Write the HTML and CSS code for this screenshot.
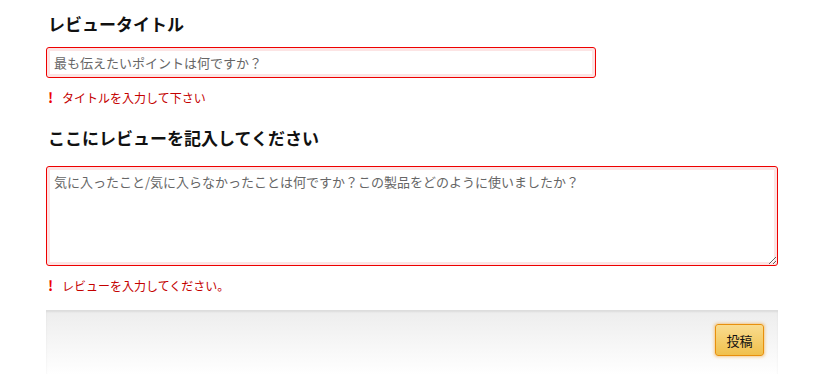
FILE: index.html
```html
<!DOCTYPE html>
<html lang="ja">
<head>
    <meta charset="UTF-8">
    <title>レビュー投稿</title>
    <link rel="stylesheet" href="styles.css">
</head>
<body>
<div class="review-form">
    <h3 class="field-title">レビュータイトル</h3>
    <input type="text" class="title-input is-error" placeholder="最も伝えたいポイントは何ですか？">
    <p class="error-msg"><span class="mark">!</span>タイトルを入力して下さい</p>

    <h3 class="field-title second">ここにレビューを記入してください</h3>
    <textarea class="body-input is-error" placeholder="気に入ったこと/気に入らなかったことは何ですか？この製品をどのように使いましたか？"></textarea>
    <p class="error-msg"><span class="mark">!</span>レビューを入力してください。</p>

    <div class="form-footer">
        <button class="submit-btn">投稿</button>
    </div>
</div>
</body>
</html>
```

FILE: styles.css
```css
body {
    margin: 0;
    font-family: "Noto Sans CJK JP", "Noto Sans", sans-serif;
    color: #111;
    background-color: #fff;
}

.review-form {
    width: 732px;
    margin-left: 46px;
}

.field-title {
    margin: 0;
    padding: 10px 0 0 2px;
    height: 27px;
    font-size: 17px;
    font-weight: bold;
    line-height: 27px;
}

.field-title.second {
    padding-top: 16px;
    height: 32px;
}

input.title-input,
textarea.body-input {
    display: block;
    box-sizing: border-box;
    font-family: inherit;
    font-size: 13px;
    color: #111;
    border: 1px solid #e00;
    border-radius: 3px;
    background-color: #fff;
    outline: none;
}

.is-error {
    box-shadow: 0 0 0 3px #fce4e4 inset;
}

input.title-input {
    width: 550px;
    height: 31px;
    margin-top: 10px;
    padding: 0 7px;
}

textarea.body-input {
    width: 732px;
    height: 100px;
    margin-top: 10px;
    padding: 6px 7px;
    resize: vertical;
    line-height: 18px;
}

::placeholder {
    color: #666;
}

.error-msg {
    margin: 0;
    padding: 8px 0 0 2px;
    height: 22px;
    font-size: 12px;
    line-height: 22px;
    color: #c40000;
}

.error-msg .mark {
    display: inline-block;
    width: 14px;
    color: #e00;
    font-weight: bold;
    font-size: 14px;
}

.form-footer {
    margin-top: 14px;
    height: 65px;
    box-sizing: border-box;
    border-top: 1px solid #ddd;
    box-shadow: 0 1px 2px rgba(0, 0, 0, 0.08) inset;
    background: linear-gradient(#ededed, #fff);
    display: flex;
    justify-content: flex-end;
    align-items: flex-start;
    padding: 13px 14px 0 0;
}

.submit-btn {
    width: 49px;
    height: 32px;
    font-family: inherit;
    font-size: 13px;
    color: #111;
    border: 1px solid #e8900c;
    border-radius: 3px;
    background: linear-gradient(#f9dc8f, #f0c04c);
    box-shadow: 0 0 3px 1px rgba(240, 160, 40, 0.5);
    cursor: pointer;
}
```
